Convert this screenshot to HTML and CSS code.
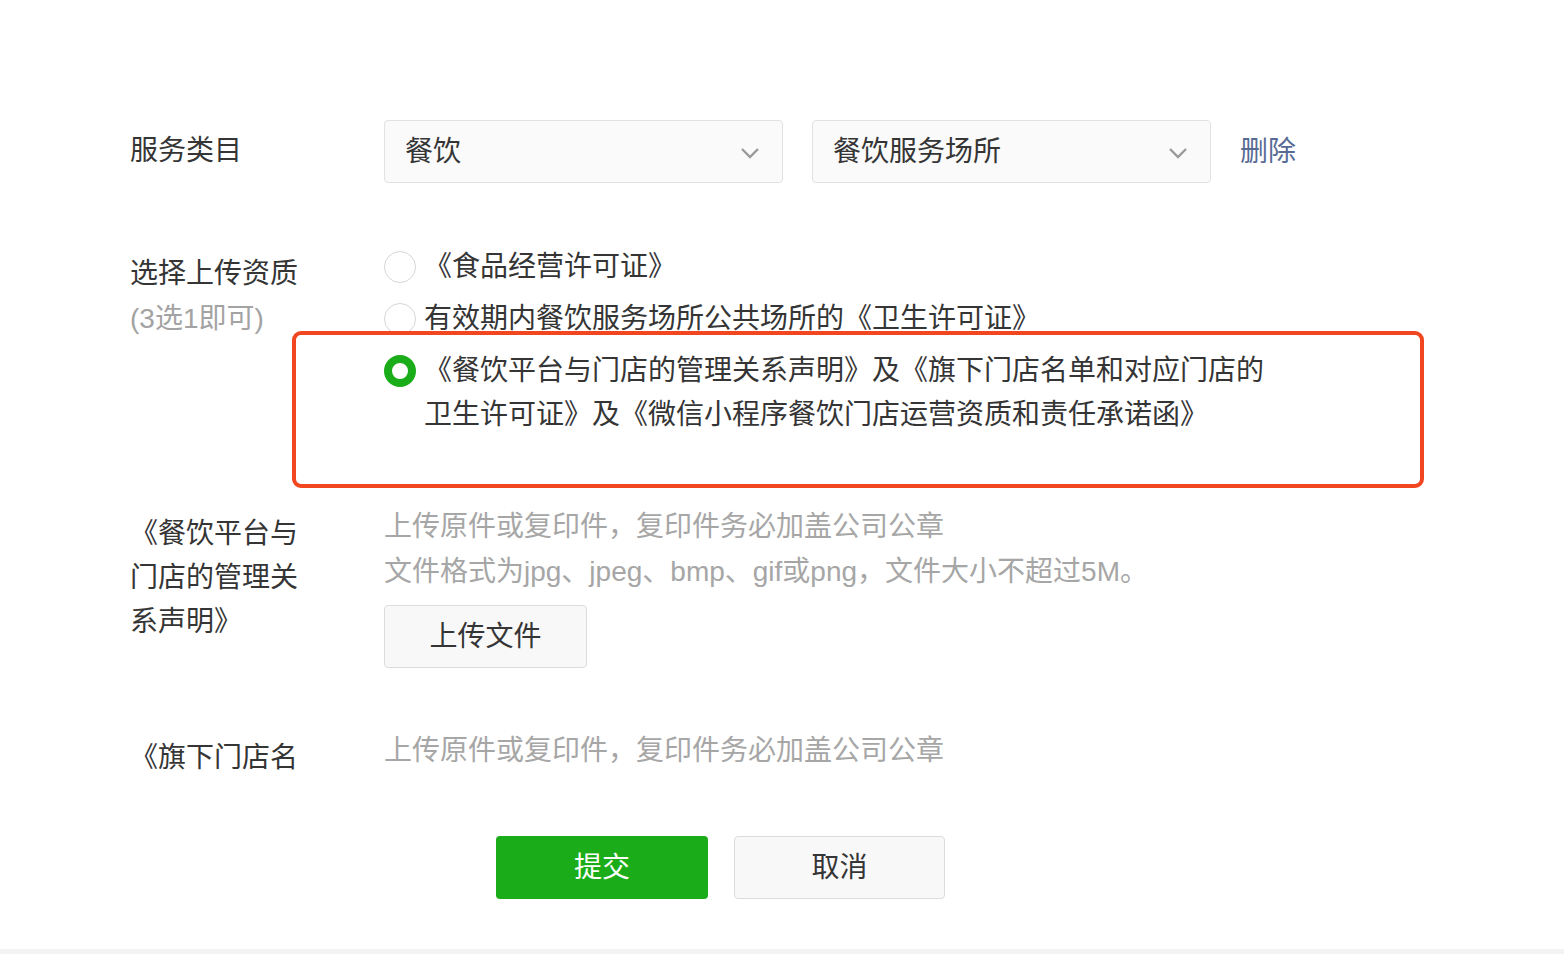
FILE: index.html
```html
<!DOCTYPE html>
<html lang="zh-CN">
<head>
    <meta charset="UTF-8">
    <title>服务类目</title>
    <link rel="stylesheet" href="styles.css">
</head>
<body>

<div class="page">
    <div class="form">
        <div class="row row-category">
            <div class="label">服务类目</div>
            <div class="content select-line">
                <div class="select">
                    <span>餐饮</span>
                    <svg class="chevron" width="20" height="12" viewBox="0 0 20 12"><path d="M2 2 L10 10 L18 2" fill="none" stroke="#9a9a9a" stroke-width="2.4"/></svg>
                </div>
                <div class="select">
                    <span>餐饮服务场所</span>
                    <svg class="chevron" width="20" height="12" viewBox="0 0 20 12"><path d="M2 2 L10 10 L18 2" fill="none" stroke="#9a9a9a" stroke-width="2.4"/></svg>
                </div>
                <a href="#" class="link">删除</a>
            </div>
        </div>

        <div class="row row-choose">
            <div class="label label-offset">
                选择上传资质<br>
                <span class="hint">(3选1即可)</span>
            </div>
            <div class="content options">
                <div class="option">
                    <span class="radio"></span>
                    <span class="option-text">《食品经营许可证》</span>
                </div>
                <div class="option">
                    <span class="radio"></span>
                    <span class="option-text">有效期内餐饮服务场所公共场所的《卫生许可证》</span>
                </div>
                <div class="option">
                    <span class="radio checked"></span>
                    <span class="option-text">《餐饮平台与门店的管理关系声明》及《旗下门店名单和对应门店的卫生许可证》及《微信小程序餐饮门店运营资质和责任承诺函》</span>
                </div>
            </div>
        </div>

        <div class="row row-upload">
            <div class="label label-wrap">《餐饮平台与门店的管理关系声明》</div>
            <div class="content">
                <p class="tips">上传原件或复印件，复印件务必加盖公司公章<br>文件格式为jpg、jpeg、bmp、gif或png，文件大小不超过5M。</p>
                <button type="button" class="btn btn-upload">上传文件</button>
            </div>
        </div>

        <div class="row row-upload2">
            <div class="label label-wrap">《旗下门店名</div>
            <div class="content">
                <p class="tips">上传原件或复印件，复印件务必加盖公司公章</p>
            </div>
        </div>

        <div class="actions">
            <button type="button" class="btn btn-primary">提交</button>
            <button type="button" class="btn btn-default">取消</button>
        </div>
    </div>

    <div class="highlight"></div>
    <div class="footer-strip"></div>
</div>

</body>
</html>
```

FILE: styles.css
```css
html, body {
    margin: 0;
    padding: 0;
    background-color: #fff;
}
body {
    font-family: "Liberation Sans", "Noto Sans CJK SC", sans-serif;
    font-size: 28px;
    color: #353535;
}
.page {
    position: relative;
    height: 954px;
    overflow: hidden;
}
.form {
    padding: 120px 0 0 130px;
}
.row {
    display: flex;
    align-items: flex-start;
}
.label {
    width: 170px;
    margin-right: 84px;
    flex-shrink: 0;
    line-height: 45px;
}
.label-offset {
    padding-top: 6px;
}
.label-wrap {
    padding-top: 8px;
    line-height: 44px;
}
.hint {
    color: #a3a3a3;
}
.row-category .label {
    line-height: 61px;
}
.content {
    width: 900px;
}
.select-line {
    display: flex;
    align-items: center;
    width: auto;
}
.select {
    box-sizing: border-box;
    width: 399px;
    height: 63px;
    margin-right: 29px;
    padding: 0 22px 0 20px;
    display: flex;
    align-items: center;
    justify-content: space-between;
    background-color: #fafafa;
    border: 1px solid #e2e2e2;
    border-radius: 4px;
    line-height: 61px;
}
.chevron {
    display: block;
    margin-top: 2px;
}
.link {
    padding-bottom: 5px;
    color: #576b95;
    text-decoration: none;
}
.row-choose {
    margin-top: 62px;
}
.option {
    display: flex;
    align-items: flex-start;
    line-height: 44px;
    margin-top: 8px;
}
.option:first-child {
    margin-top: 0;
}
.radio {
    box-sizing: border-box;
    flex-shrink: 0;
    width: 32px;
    height: 32px;
    margin: 6px 8px 0 0;
    border: 1.5px solid #d6d6d6;
    border-radius: 50%;
    background-color: #fff;
}
.radio.checked {
    border: 8px solid #1aad19;
}
.option-text {
    max-width: 860px;
}
.row-upload {
    margin-top: 67px;
}
.tips {
    margin: 0;
    color: #a6a6a6;
    line-height: 45px;
}
.btn {
    box-sizing: border-box;
    height: 63px;
    padding: 0 0 5px;
    font-family: inherit;
    font-size: 28px;
    border-radius: 4px;
    cursor: pointer;
}
.btn-upload {
    display: block;
    width: 203px;
    margin-top: 11px;
    color: #353535;
    background-color: #f8f8f8;
    border: 1px solid #dcdcdc;
}
.row-upload2 {
    margin-top: 60px;
}
.actions {
    display: flex;
    gap: 26px;
    margin: 56px 0 0 366px;
}
.btn-primary {
    width: 212px;
    color: #fff;
    background-color: #1aad19;
    border: none;
}
.btn-default {
    width: 211px;
    color: #353535;
    background-color: #f8f8f8;
    border: 1px solid #dcdcdc;
}
.highlight {
    position: absolute;
    left: 292px;
    top: 331px;
    width: 1132px;
    height: 157px;
    box-sizing: border-box;
    border: 4px solid #f1461f;
    border-radius: 9px;
}
.footer-strip {
    position: absolute;
    left: 0;
    right: 0;
    bottom: 0;
    height: 5px;
    background-color: #f3f3f3;
}
```
